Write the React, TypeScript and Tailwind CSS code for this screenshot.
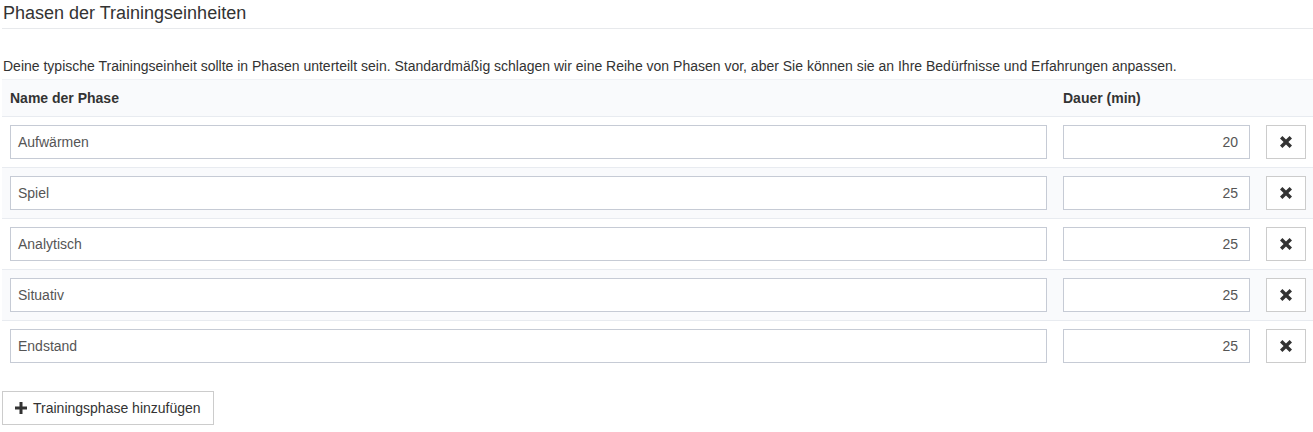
import React from "react";

const phases = [
  { name: "Aufwärmen", dur: "20" },
  { name: "Spiel", dur: "25" },
  { name: "Analytisch", dur: "25" },
  { name: "Situativ", dur: "25" },
  { name: "Endstand", dur: "25" },
];

function XIcon() {
  return (
    <svg width="12" height="12" viewBox="0 0 12 12" aria-hidden="true">
      <path d="M0 2.4 L2.4 0 L6 3.6 L9.6 0 L12 2.4 L8.4 6 L12 9.6 L9.6 12 L6 8.4 L2.4 12 L0 9.6 L3.6 6 Z" fill="#333" />
    </svg>
  );
}

function PlusIcon() {
  return (
    <svg width="12" height="12" viewBox="0 0 12 12" aria-hidden="true">
      <rect x="4.5" y="0" width="3" height="12" fill="#333" />
      <rect x="0" y="4.5" width="12" height="3" fill="#333" />
    </svg>
  );
}

export default function App() {
  return (
    <div
      className="w-[1313px] h-[432px] overflow-hidden bg-white pl-[2px] text-[14px] text-[#333]"
      style={{ fontFamily: '"Liberation Sans", Arial, sans-serif' }}
    >
      <div className="pt-[3px] pb-[5px] border-b border-[#e7e9ec] text-[18px] leading-[20px] pl-px">
        Phasen der Trainingseinheiten
      </div>
      <p className="mt-[27px] mb-[3px] leading-[20px] pl-px">
        Deine typische Trainingseinheit sollte in Phasen unterteilt sein. Standardmäßig schlagen wir eine Reihe von Phasen vor, aber Sie können sie an Ihre Bedürfnisse und Erfahrungen anpassen.
      </p>
      <div className="w-[1312px]">
        <div className="flex gap-4 px-2 py-2 bg-[#f9fafc] border-t border-[#f0f2f5] font-bold leading-[20px]">
          <div className="flex-1">Name der Phase</div>
          <div className="w-[187px]">Dauer (min)</div>
          <div className="w-[40px]" />
        </div>
        {phases.map((p, i) => (
          <div
            key={p.name}
            className={
              "flex gap-4 px-2 py-2 border-t border-[#e8ebf0] " +
              (i % 2 === 1 ? "bg-[#f9fafc]" : "bg-white")
            }
          >
            <div className="flex-1 h-[34px] border border-[#c6cbd5] bg-white px-[7px] flex items-center text-[#555]">
              {p.name}
            </div>
            <div className="w-[187px] h-[34px] border border-[#c6cbd5] bg-white pr-[11px] flex items-center justify-end text-[#555]">
              {p.dur}
            </div>
            <button className="w-[40px] h-[34px] border border-[#ccc] bg-white flex items-center justify-center">
              <XIcon />
            </button>
          </div>
        ))}
      </div>
      <button className="mt-[20px] h-[34px] border border-[#ccc] bg-white pl-[12px] pr-[12px] flex items-center gap-[6px] leading-[20px] text-[#333]">
        <PlusIcon />
        <span>Trainingsphase hinzufügen</span>
      </button>
    </div>
  );
}
